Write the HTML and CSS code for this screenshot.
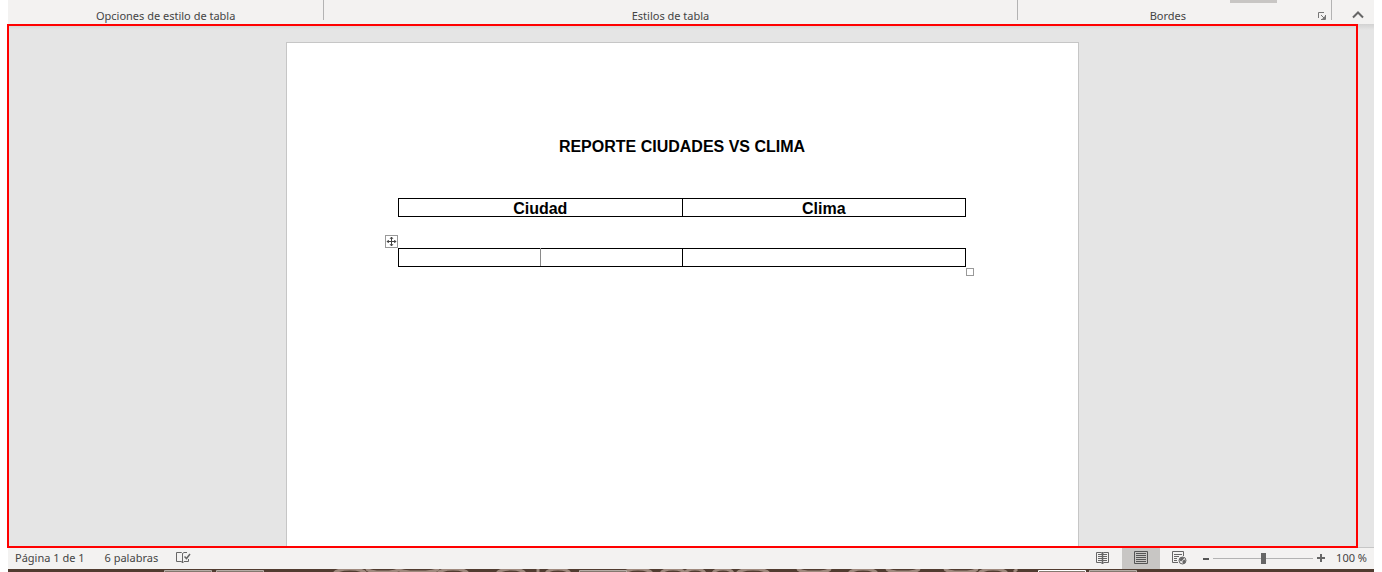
FILE: index.html
```html
<!DOCTYPE html>
<html lang="es">
<head>
<meta charset="utf-8">
<title>Reporte ciudades vs clima</title>
<link rel="stylesheet" href="styles.css">
</head>
<body>
<div class="app">
  <header class="ribbon">
    <section class="group group-options"><span class="group-name">Opciones de estilo de tabla</span></section>
    <section class="group group-styles"><span class="group-name">Estilos de tabla</span></section>
    <section class="group group-borders">
      <span class="gallery-edge"></span>
      <span class="group-name">Bordes</span>
      <button class="icon-button" aria-label="Bordes y sombreado">
        <svg width="8" height="8" viewBox="0 0 8 8"><path d="M.5 6V.5H6" fill="none" stroke="#777"/><path d="M3 3l3 3" stroke="#777"/><path d="M7.500 3v4.500H3" fill="none" stroke="#777"/><path d="M7 4v3H4z" fill="#777"/></svg>
      </button>
    </section>
    <button class="icon-button collapse" aria-label="Contraer la cinta de opciones">
      <svg width="12" height="8" viewBox="0 0 12 8"><path d="M1 6.500l5-5 5 5" fill="none" stroke="#666" stroke-width="2"/></svg>
    </button>
  </header>

  <main class="workspace">
    <div class="frame">
      <article class="page">
        <h1 class="title">REPORTE CIUDADES VS CLIMA</h1>
        <table class="grid">
          <tr><th>Ciudad</th><th>Clima</th></tr>
        </table>
        <div class="selected">
          <button class="move-handle" aria-label="Mover tabla">
            <svg width="11" height="11" viewBox="0 0 11 11"><path d="M5.500 1v9M1 5.500h9" stroke="#444"/><path d="M4 2.500h3L5.500 1zM4 8.500h3L5.500 10zM2.500 4v3L1 5.500zM8.500 4v3L10 5.500z" fill="#444" stroke="#444" stroke-width=".5"/></svg>
          </button>
          <table class="grid">
            <colgroup><col class="quarter"><col class="quarter"><col class="half"></colgroup>
            <tr><td class="split-start"></td><td class="split-end"></td><td></td></tr>
          </table>
          <span class="resize-handle"></span>
        </div>
      </article>
    </div>
  </main>

  <footer class="status">
    <span class="label">Página 1 de 1</span>
    <span class="label word-count">6 palabras</span>
    <button class="icon-button proofing" aria-label="Revisión">
      <svg width="15" height="14" viewBox="0 0 15 14" fill="none" stroke="#666"><path d="M6.500 2.500L5.500 1.500h-5v9h5l1 1.500 1.500-1.500h4.500V8"/><path d="M6.500 2.500V12M6.500 2.500l1.500-1h3"/><path d="M8.500 5.500l2 2L14 3" stroke-width="1.500"/></svg>
    </button>
    <button class="view view-first" aria-label="Modo de lectura">
      <svg width="14" height="14" viewBox="0 0 14 14" fill="none" stroke="#666"><path d="M6.500 2.500L5 1.500H.5v10H5l1.500 1 1.500-1h4.500v-10H8l-1.500 1"/><path d="M6.500 1v12" stroke-width="1.500"/><path d="M2 3.500h9M2 5.500h9M2 7.500h9M2 9.500h9"/></svg>
    </button>
    <button class="view view-active" aria-label="Diseño de impresión">
      <svg width="14" height="14" viewBox="0 0 14 14" fill="none" stroke="#555"><path d="M.5.500h13v12H.5z"/><path d="M2 2.500h10M2 4.500h10M2 6.500h10M2 8.500h10M2 10.500h10"/></svg>
    </button>
    <button class="view" aria-label="Diseño web">
      <svg width="15" height="14" viewBox="0 0 15 14" fill="none" stroke="#666"><path d="M6 11.500H.5v-11h11V5M2 3.500h8M2 5.500h5M2 7.500h3M2 9.500h3"/><circle cx="10.500" cy="9.500" r="3.500" fill="#f3f2f1"/><path d="M7.500 9l2-2.500 2 .5-1 2-1.500 1zM11 10l2-1v2l-2 1.500z" fill="#666"/></svg>
    </button>
    <div class="zoom">
      <button class="icon-button" aria-label="Alejar"><svg width="6" height="7" viewBox="0 0 6 7"><path d="M0 4h6" stroke="#555" stroke-width="2"/></svg></button>
      <input class="slider" type="range" min="0" max="100" value="50" aria-label="Zoom">
      <button class="icon-button" aria-label="Acercar"><svg width="8" height="8" viewBox="0 0 8 8"><path d="M0 4h8M4 0v8" stroke="#666" stroke-width="2"/></svg></button>
    </div>
    <span class="label zoom-value">100 %</span>
  </footer>

  <div class="taskbar">
    <svg class="pattern" viewBox="0 0 1366 3" preserveAspectRatio="none">
      <g fill="none" stroke="#a08a7e" stroke-width="3">
        <ellipse cx="342" cy="5" rx="16" ry="5"/><ellipse cx="375" cy="0" rx="16" ry="3"/><ellipse cx="410" cy="0" rx="20" ry="3"/><ellipse cx="445" cy="5" rx="15" ry="5"/>
        <ellipse cx="503" cy="5" rx="14" ry="5"/><path d="M530 0v3"/><ellipse cx="550" cy="5" rx="12" ry="5"/><ellipse cx="630" cy="5" rx="14" ry="5"/><ellipse cx="665" cy="5" rx="12" ry="5"/>
        <ellipse cx="687" cy="5" rx="10" ry="5"/><ellipse cx="715" cy="5" rx="10" ry="5"/><ellipse cx="745" cy="5" rx="16" ry="5"/><ellipse cx="806" cy="0" rx="16" ry="3"/><ellipse cx="855" cy="5" rx="14" ry="5"/><ellipse cx="895" cy="0" rx="16" ry="3"/><ellipse cx="953" cy="0" rx="16" ry="3"/><ellipse cx="985" cy="5" rx="14" ry="5"/><path d="M1009 0l-3 3"/>
      </g>
      <g fill="#857970" stroke="#b5aca5"><path d="M156.500 4V1.500h47V4zM208.500 4V1.500h47V4zM571.500 4V1.500h47V4zM1081.500 4V1.500h47V4z"/><path d="M1030.500 4V1.500h47V4z" stroke="#fff"/></g>
    </svg>
  </div>
</div>
</body>
</html>
```
FILE: styles.css
```css
* { box-sizing: border-box; }

body {
  margin: 0;
  padding: 0 8px;
  background: #fff;
  color: #444;
  font-family: "Noto Sans", "Open Sans", sans-serif;
  font-size: 11px;
}

button {
  margin: 0;
  padding: 0;
  border: 0;
  background: none;
  font: inherit;
}

svg { display: block; }

.app {
  display: flex;
  flex-direction: column;
  height: 100vh;
}

.ribbon {
  display: flex;
  height: 24px;
  background: #f3f2f1;
}

.group {
  position: relative;
  display: flex;
  align-items: center;
  justify-content: center;
  height: 20px;
  padding-top: 12px;
  border-right: 1px solid #b3b3b3;
  line-height: 16px;
}

.group-options { flex: 316; }
.group-styles { flex: 694; }
.group-borders { flex: 314; }
.group-borders .group-name { flex: 1; text-align: center; }
.group-borders .icon-button { margin-right: 5px; }

.gallery-edge {
  position: absolute;
  top: 0;
  right: 54px;
  width: 47px;
  height: 3px;
  background: #c8c6c4;
}

.collapse {
  width: 42px;
  display: flex;
  justify-content: center;
  padding: 11px 0 0 11px;
}

.workspace {
  flex: 1;
  display: flex;
  min-height: 0;
  background: linear-gradient(#d2d2d2, #e5e5e5 6px);
  border-bottom: 1px solid #c6c6c6;
}

.frame {
  flex: 1;
  display: flex;
  justify-content: center;
  margin: 0 16px -1px -1px;
  padding-top: 16px;
  border: 2px solid #f00;
  overflow: hidden;
}

.page {
  width: 793px;
  padding: 95px 112px 0 111px;
  border: 1px solid #c6c6c6;
  border-bottom: 0;
  background: #fff;
  color: #000;
  font-family: "Liberation Sans", Arial, sans-serif;
  font-size: 16px;
  line-height: 18px;
}

.title {
  margin: 0 0 42px;
  font-size: 16px;
  text-align: center;
}

.grid {
  width: 100%;
  table-layout: fixed;
  border-collapse: collapse;
}

.grid th,
.grid td {
  height: 18px;
  padding: 2px 0 0;
  border: 1px solid #000;
  line-height: 15px;
}

.grid .split-start { border-right-color: #8a8a8a; }
.grid .split-end { border-left-color: #8a8a8a; }
.quarter { width: 25%; }
.half { width: 50%; }

.selected {
  position: relative;
  margin-top: 31px;
}

.move-handle {
  position: absolute;
  top: -13px;
  left: -13px;
  width: 13px;
  height: 13px;
  border: 1px solid #999;
}

.resize-handle {
  position: absolute;
  right: -8px;
  bottom: -9px;
  width: 8px;
  height: 8px;
  border: 1px solid #999;
}

.status {
  display: flex;
  align-items: center;
  height: 21px;
  padding: 0 7px;
  background: #f3f2f1;
  line-height: 16px;
}

.label { padding-bottom: 2px; }
.word-count { margin-left: 20px; }

.proofing {
  margin-left: 18px;
  padding-bottom: 2px;
}

.view {
  display: flex;
  align-items: center;
  justify-content: center;
  width: 38px;
  height: 100%;
  padding-bottom: 2px;
}

.view-first { margin-left: auto; }
.view-active { background: #c8c6c4; }

.zoom {
  display: flex;
  align-items: center;
  gap: 4px;
  margin-left: 5px;
  padding-bottom: 1px;
}

.slider {
  width: 100px;
  height: 11px;
  margin: 0;
  appearance: none;
  background: linear-gradient(#b3b3b3, #b3b3b3) center / 100% 1px no-repeat;
}

.slider::-webkit-slider-thumb {
  appearance: none;
  width: 5px;
  height: 11px;
  background: #666;
}

.zoom-value { margin-left: 11px; }

.taskbar {
  height: 3px;
  background: #513c30;
  overflow: hidden;
}

.pattern {
  width: 100%;
  height: 3px;
}
```
